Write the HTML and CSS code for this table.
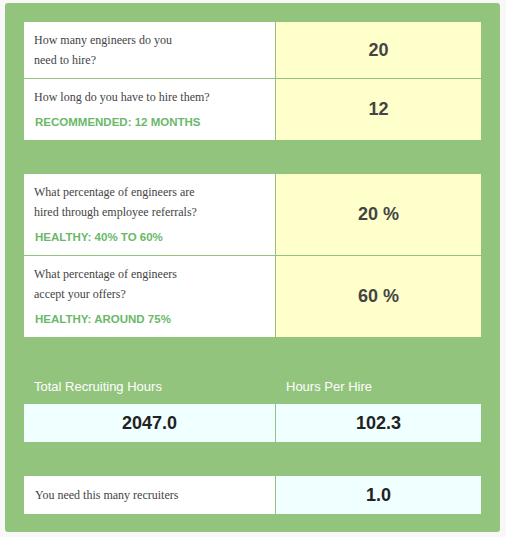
FILE: index.html
```html
<!DOCTYPE html>
<html lang="en-us">
  <head>
    <meta charset="utf-8">
    <title>Recruiter Calculator</title>
    <link rel="stylesheet" href="styles.css">
  </head>
  <body>
    <main class="calc">

      <div class="grid">
        <div class="question">How many engineers do you<br>need to hire?</div>
        <div class="answer">20</div>
        <div class="question">How long do you have to hire them?
          <p class="hint">RECOMMENDED: 12 MONTHS</p>
        </div>
        <div class="answer">12</div>
      </div>

      <div class="grid spaced">
        <div class="question">What percentage of engineers are<br>hired through employee referrals?
          <p class="hint">HEALTHY: 40% TO 60%</p>
        </div>
        <div class="answer">20 %</div>
        <div class="question">What percentage of engineers<br>accept your offers?
          <p class="hint">HEALTHY: AROUND 75%</p>
        </div>
        <div class="answer">60 %</div>
      </div>

      <div class="grid labels">
        <div class="label">Total Recruiting Hours</div>
        <div class="label">Hours Per Hire</div>
      </div>
      <div class="grid">
        <div class="result">2047.0</div>
        <div class="result">102.3</div>
      </div>

      <div class="grid spaced">
        <div class="question single">You need this many recruiters</div>
        <div class="result">1.0</div>
      </div>

    </main>
  </body>
</html>
```

FILE: styles.css
```css
body {
  margin: 0;
  background: #f8f8f8;
  font-family: "Liberation Sans", Arial, sans-serif;
}

.calc {
  margin: 3px 6px 5px 5px;
  padding: 19px 19px 18px 19px;
  background: #93c47d;
  border-radius: 3px;
}

.grid {
  display: grid;
  grid-template-columns: 251px 1fr;
  gap: 1px;
}

.spaced {
  margin-top: 34px;
}

.question {
  background: #ffffff;
  padding: 8px 10px 8px 10px;
  font-family: "Liberation Serif", "Times New Roman", serif;
  font-size: 12px;
  line-height: 20px;
  color: #444444;
}

.question.single {
  padding: 9px 11px;
}

.hint {
  margin: 6px 0 1px 1px;
  font-family: "Liberation Sans", Arial, sans-serif;
  font-size: 11.5px;
  font-weight: bold;
  line-height: 18px;
  color: #6ab86a;
}

.answer {
  background: #ffffcc;
  display: flex;
  align-items: center;
  justify-content: center;
  font-size: 18px;
  font-weight: bold;
  color: #444444;
}

.labels {
  margin-top: 40px;
  margin-bottom: 7px;
}

.label {
  padding-left: 10px;
  font-size: 13px;
  line-height: 20px;
  color: #ffffff;
}

.result {
  background: #f0ffff;
  height: 38px;
  display: flex;
  align-items: center;
  justify-content: center;
  font-size: 18px;
  font-weight: bold;
  color: #222222;
}
```
